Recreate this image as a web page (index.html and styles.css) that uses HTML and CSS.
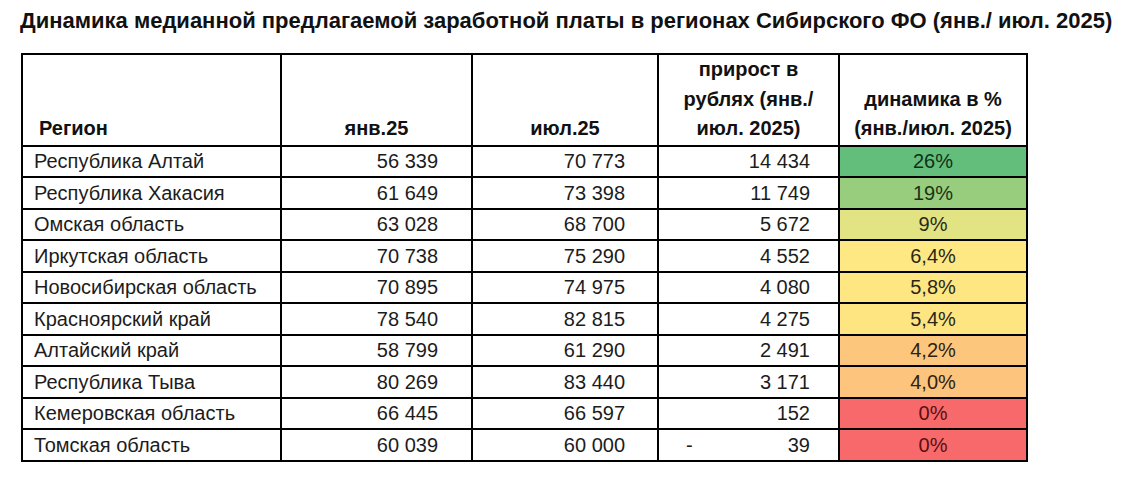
FILE: index.html
```html
<!DOCTYPE html>
<html lang="ru">
<head>
<meta charset="utf-8">
<link rel="stylesheet" href="styles.css">
</head>
<body>
<div class="page">
  <h1 class="title">Динамика медианной предлагаемой заработной платы в регионах Сибирского ФО (янв./ июл. 2025)</h1>
  <table class="grid">
    <colgroup>
      <col class="c1"><col class="c2"><col class="c3"><col class="c4"><col class="c5">
    </colgroup>
    <thead>
      <tr class="head">
        <th class="h-left">Регион</th>
        <th>янв.25</th>
        <th>июл.25</th>
        <th>прирост в<br>рублях (янв./<br>июл. 2025)</th>
        <th>динамика в %<br>(янв./июл. 2025)</th>
      </tr>
    </thead>
    <tbody>
      <tr><td class="name">Республика Алтай</td><td class="num n2">56 339</td><td class="num n3">70 773</td><td class="num n4">14 434</td><td class="pct g1">26%</td></tr>
      <tr><td class="name">Республика Хакасия</td><td class="num n2">61 649</td><td class="num n3">73 398</td><td class="num n4">11 749</td><td class="pct g2">19%</td></tr>
      <tr><td class="name">Омская область</td><td class="num n2">63 028</td><td class="num n3">68 700</td><td class="num n4">5 672</td><td class="pct g3">9%</td></tr>
      <tr><td class="name">Иркутская область</td><td class="num n2">70 738</td><td class="num n3">75 290</td><td class="num n4">4 552</td><td class="pct y1">6,4%</td></tr>
      <tr><td class="name">Новосибирская область</td><td class="num n2">70 895</td><td class="num n3">74 975</td><td class="num n4">4 080</td><td class="pct y2">5,8%</td></tr>
      <tr><td class="name">Красноярский край</td><td class="num n2">78 540</td><td class="num n3">82 815</td><td class="num n4">4 275</td><td class="pct y3">5,4%</td></tr>
      <tr><td class="name">Алтайский край</td><td class="num n2">58 799</td><td class="num n3">61 290</td><td class="num n4">2 491</td><td class="pct o1">4,2%</td></tr>
      <tr><td class="name">Республика Тыва</td><td class="num n2">80 269</td><td class="num n3">83 440</td><td class="num n4">3 171</td><td class="pct o2">4,0%</td></tr>
      <tr><td class="name">Кемеровская область</td><td class="num n2">66 445</td><td class="num n3">66 597</td><td class="num n4">152</td><td class="pct r1">0%</td></tr>
      <tr><td class="name">Томская область</td><td class="num n2">60 039</td><td class="num n3">60 000</td><td class="num n4"><span class="minus">-</span><span>39</span></td><td class="pct r1">0%</td></tr>
    </tbody>
  </table>
</div>
</body>
</html>
```
FILE: styles.css
```css
html, body {
  margin: 0;
  padding: 0;
  background: #ffffff;
}
.page {
  padding: 8px 0 0 21px;
  font-family: "Liberation Sans", Arial, sans-serif;
  color: #1c1c1c;
}
.title {
  margin: 0 0 0 -1px;
  font-size: 22px;
  line-height: 26px;
  font-weight: bold;
  color: #111;
  white-space: nowrap;
}
.grid {
  margin-top: 19px;
  border-collapse: collapse;
  table-layout: fixed;
  width: 1005px;
  font-size: 20px;
}
.c1 { width: 259px; }
.c2 { width: 191px; }
.c3 { width: 186px; }
.c4 { width: 181px; }
.c5 { width: 188px; }
.grid th, .grid td {
  border: 2px solid #000;
  padding: 0;
}
.head th {
  height: 88px;
  vertical-align: bottom;
  font-weight: bold;
  line-height: 29.5px;
  text-align: center;
  padding-bottom: 1px;
  color: #111;
}
.head th.h-left {
  text-align: left;
  padding-left: 16px;
}
.grid tbody tr {
  height: 31.5px;
}
.grid td {
  line-height: 26px;
  white-space: nowrap;
}
.name {
  padding-left: 11px !important;
}
.num {
  text-align: right;
}
.n2 { padding-right: 33px !important; }
.n3 { padding-right: 32px !important; }
.n4 { padding-right: 28px !important; }
.minus {
  float: left;
  padding-left: 27px;
}
.pct {
  text-align: center;
}
.g1 { background: #63be7b; color: #10301a; }
.g2 { background: #98cd7e; color: #183318; }
.g3 { background: #e2e383; color: #2a2a18; }
.y1 { background: #fde883; color: #2a2718; }
.y2 { background: #fee783; color: #2a2718; }
.y3 { background: #fee582; color: #2a2618; }
.o1 { background: #fcc77d; color: #2e2214; }
.o2 { background: #fcc47c; color: #2e2214; }
.r1 { background: #f8696b; color: #5a1010; }
```
